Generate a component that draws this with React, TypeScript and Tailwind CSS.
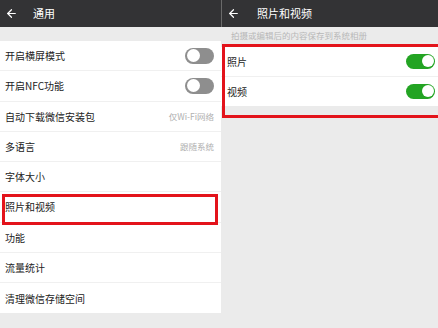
import { ArrowLeft } from "lucide-react";

const font = { fontFamily: '"Noto Sans CJK SC", "Noto Sans", sans-serif' };

type Row = { label: string; toggle?: boolean; value?: string };

const rows: Row[] = [
  { label: "开启横屏模式", toggle: true },
  { label: "开启NFC功能", toggle: true },
  { label: "自动下载微信安装包", value: "仅Wi-Fi网络" },
  { label: "多语言", value: "跟随系统" },
  { label: "字体大小" },
  { label: "照片和视频" },
  { label: "功能" },
  { label: "流量统计" },
  { label: "清理微信存储空间" },
];

function Toggle({ on }: { on: boolean }) {
  return on ? (
    <div className="flex h-[15px] w-[29px] items-center justify-end rounded-full bg-[#23a423] pr-[1.5px]">
      <div className="h-[12px] w-[12px] rounded-full bg-white" />
    </div>
  ) : (
    <div className="flex h-[16px] w-[29px] items-center rounded-full bg-[#8e8e8e] pl-[1.5px]">
      <div className="h-[13px] w-[13px] rounded-full bg-white" />
    </div>
  );
}

export default function App() {
  return (
    <div className="flex h-[328px] w-[438px] overflow-hidden bg-[#ebebeb]" style={font}>
      {/* Left: 通用 */}
      <div className="flex w-[221px] flex-col">
        <div className="flex h-[27px] items-center bg-[#333335] text-white">
          <ArrowLeft size={13} strokeWidth={2.2} className="ml-[5px]" />
          <span className="ml-[15px] text-[11px] leading-none">通用</span>
        </div>
        <div className="h-[14px]" />
        <div className="bg-white">
          {rows.map((r, i) => (
            <div
              key={r.label}
              className={`relative flex h-[30.25px] items-center justify-between pl-[5px] pr-[7px] ${i < rows.length - 1 ? "border-b border-[#f0f0f0]" : ""}`}
            >
              <span className="text-[10px] text-[#222]">{r.label}</span>
              {r.toggle && <Toggle on={false} />}
              {r.value && <span className="text-[8.5px] text-[#b0b0b0]">{r.value}</span>}
              {r.label === "照片和视频" && (
                <div className="pointer-events-none absolute bottom-[-3px] left-[2px] right-[3px] top-[2px] border-[3px] border-[#e3131b]" />
              )}
            </div>
          ))}
        </div>
      </div>

      {/* Right: 照片和视频 */}
      <div className="flex flex-1 flex-col">
        <div className="flex h-[27px] items-center border-l border-[#6a6a6a] bg-[#333335] text-white">
          <ArrowLeft size={13} strokeWidth={2.2} className="ml-[5px]" />
          <span className="ml-[17px] text-[11px] leading-none">照片和视频</span>
        </div>
        <div className="relative flex flex-col">
          <div className="flex h-[17px] items-center pl-[10px] text-[8.5px] text-[#b8b8b8]">
            拍摄或编辑后的内容保存到系统相册
          </div>
          <div className="mt-[3px] bg-white">
            <div className="flex h-[29.5px] items-center justify-between border-b border-[#f0f0f0] pl-[6px] pr-[3px]">
              <span className="text-[10px] text-[#222]">照片</span>
              <Toggle on />
            </div>
            <div className="flex h-[29.5px] items-center justify-between pl-[6px] pr-[3px]">
              <span className="text-[10px] text-[#222]">视频</span>
              <Toggle on />
            </div>
          </div>
          <div className="pointer-events-none absolute left-[1px] right-[-4px] top-[17px] h-[74px] border-[3px] border-[#e3131b]" />
        </div>
      </div>
    </div>
  );
}
